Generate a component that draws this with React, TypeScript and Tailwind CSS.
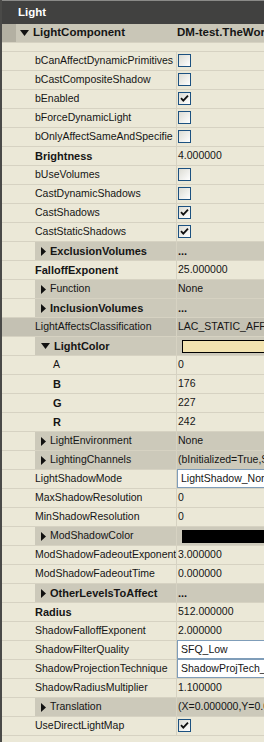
import React from 'react';

type Kind = 'prop' | 'struct' | 'open' | 'child' | 'selected';
type Val =
  | { t: 'text'; v: string; bold?: boolean }
  | { t: 'check'; on: boolean }
  | { t: 'combo'; v: string }
  | { t: 'swatch'; color: string };

type Row = { name: string; kind: Kind; bold?: boolean; value: Val };

const rows: Row[] = [
  { name: 'bCanAffectDynamicPrimitives', kind: 'prop', value: { t: 'check', on: false } },
  { name: 'bCastCompositeShadow', kind: 'prop', value: { t: 'check', on: false } },
  { name: 'bEnabled', kind: 'prop', value: { t: 'check', on: true } },
  { name: 'bForceDynamicLight', kind: 'prop', value: { t: 'check', on: false } },
  { name: 'bOnlyAffectSameAndSpecifie', kind: 'prop', value: { t: 'check', on: false } },
  { name: 'Brightness', kind: 'prop', bold: true, value: { t: 'text', v: '4.000000' } },
  { name: 'bUseVolumes', kind: 'prop', value: { t: 'check', on: false } },
  { name: 'CastDynamicShadows', kind: 'prop', value: { t: 'check', on: false } },
  { name: 'CastShadows', kind: 'prop', value: { t: 'check', on: true } },
  { name: 'CastStaticShadows', kind: 'prop', value: { t: 'check', on: true } },
  { name: 'ExclusionVolumes', kind: 'struct', bold: true, value: { t: 'text', v: '...', bold: true } },
  { name: 'FalloffExponent', kind: 'prop', bold: true, value: { t: 'text', v: '25.000000' } },
  { name: 'Function', kind: 'struct', value: { t: 'text', v: 'None' } },
  { name: 'InclusionVolumes', kind: 'struct', bold: true, value: { t: 'text', v: '...', bold: true } },
  { name: 'LightAffectsClassification', kind: 'selected', value: { t: 'text', v: 'LAC_STATIC_AFFECTING' } },
  { name: 'LightColor', kind: 'open', bold: true, value: { t: 'swatch', color: '#f2e3b0' } },
  { name: 'A', kind: 'child', value: { t: 'text', v: '0' } },
  { name: 'B', kind: 'child', bold: true, value: { t: 'text', v: '176' } },
  { name: 'G', kind: 'child', bold: true, value: { t: 'text', v: '227' } },
  { name: 'R', kind: 'child', bold: true, value: { t: 'text', v: '242' } },
  { name: 'LightEnvironment', kind: 'struct', value: { t: 'text', v: 'None' } },
  { name: 'LightingChannels', kind: 'struct', value: { t: 'text', v: '(bInitialized=True,Static=True)' } },
  { name: 'LightShadowMode', kind: 'prop', value: { t: 'combo', v: 'LightShadow_Normal' } },
  { name: 'MaxShadowResolution', kind: 'prop', value: { t: 'text', v: '0' } },
  { name: 'MinShadowResolution', kind: 'prop', value: { t: 'text', v: '0' } },
  { name: 'ModShadowColor', kind: 'struct', value: { t: 'swatch', color: '#000000' } },
  { name: 'ModShadowFadeoutExponent', kind: 'prop', value: { t: 'text', v: '3.000000' } },
  { name: 'ModShadowFadeoutTime', kind: 'prop', value: { t: 'text', v: '0.000000' } },
  { name: 'OtherLevelsToAffect', kind: 'struct', bold: true, value: { t: 'text', v: '...', bold: true } },
  { name: 'Radius', kind: 'prop', bold: true, value: { t: 'text', v: '512.000000' } },
  { name: 'ShadowFalloffExponent', kind: 'prop', value: { t: 'text', v: '2.000000' } },
  { name: 'ShadowFilterQuality', kind: 'prop', value: { t: 'combo', v: 'SFQ_Low' } },
  { name: 'ShadowProjectionTechnique', kind: 'prop', value: { t: 'combo', v: 'ShadowProjTech_Default' } },
  { name: 'ShadowRadiusMultiplier', kind: 'prop', value: { t: 'text', v: '1.100000' } },
  { name: 'Translation', kind: 'struct', value: { t: 'text', v: '(X=0.000000,Y=0.000000,Z=0.000000)' } },
  { name: 'UseDirectLightMap', kind: 'prop', value: { t: 'check', on: true } },
];

function Arrow({ open }: { open?: boolean }) {
  return open ? (
    <svg width="9" height="6" viewBox="0 0 9 6" className="flex-shrink-0">
      <path d="M0 0 H9 L4.5 6 Z" fill="#111" />
    </svg>
  ) : (
    <svg width="5" height="9" viewBox="0 0 5 9" className="flex-shrink-0">
      <path d="M0 0 L5 4.5 L0 9 Z" fill="#111" />
    </svg>
  );
}

function Check({ on }: { on: boolean }) {
  return (
    <div className="w-[13px] h-[13px] mt-[2px] border border-[#1c5180] bg-gradient-to-br from-[#dcdcd4] to-white flex items-center justify-center">
      {on && (
        <svg width="9" height="9" viewBox="0 0 9 9">
          <path d="M1 4.2 L3.3 6.6 L8 1.6" stroke="#111" strokeWidth="1.8" fill="none" />
        </svg>
      )}
    </div>
  );
}

function Value({ v }: { v: Val }) {
  if (v.t === 'check') return <div className="pl-[1px]"><Check on={v.on} /></div>;
  if (v.t === 'combo')
    return (
      <div className="h-[19px] -mt-[1px] bg-white border border-[#7f9db9] border-r-0 pl-[3px] flex items-center whitespace-nowrap overflow-hidden">
        {v.v}
      </div>
    );
  if (v.t === 'swatch')
    return (
      <div className="pl-[5px] pt-[3px]">
        <div className="h-[13px] border border-black border-r-0" style={{ backgroundColor: v.color }} />
      </div>
    );
  return (
    <div className={`pl-[1px] pt-[1px] whitespace-nowrap overflow-hidden ${v.bold ? 'font-bold text-[11px]' : ''}`}>
      {v.v}
    </div>
  );
}

function PropRow({ row }: { row: Row }) {
  const gray = row.kind === 'struct' || row.kind === 'open';
  const sel = row.kind === 'selected';
  const nameCls = row.bold ? 'font-bold text-[11px]' : '';
  return (
    <div className={`flex h-[19px] border-b border-[#d6d2c2] ${sel ? 'bg-[#c4c1b3]' : ''}`}>
      <div className="w-[174px] flex flex-shrink-0 overflow-hidden">
        {gray ? (
          <>
            <div className="w-[33px] flex-shrink-0" />
            <div className="flex-1 bg-[#ccc9ba] flex items-center gap-[4px] pl-[6px] whitespace-nowrap">
              <Arrow open={row.kind === 'open'} />
              <span className={nameCls}>{row.name}</span>
            </div>
          </>
        ) : (
          <div
            className={`flex items-center whitespace-nowrap ${row.kind === 'child' ? 'pl-[51px]' : 'pl-[33px]'} ${nameCls}`}
          >
            {row.name}
          </div>
        )}
      </div>
      <div className={`flex-1 min-w-0 border-l border-[#d6d2c2] ${gray ? 'bg-[#ccc9ba]' : ''}`}>
        <Value v={row.value} />
      </div>
    </div>
  );
}

export default function App() {
  return (
    <div
      className="w-[264px] h-[742px] overflow-hidden bg-[#ebe8d7] border-l-2 border-[#4a4a48] text-[10.5px] text-[#151515]"
      style={{ fontFamily: '"Liberation Sans", Arial, sans-serif' }}
    >
      {/* title bar */}
      <div className="h-[24px] bg-[#414140] border-t border-[#8a8a88] flex items-center pl-[16px] text-white font-bold text-[11.5px]">
        Light
      </div>
      {/* component header */}
      <div className="h-[19px] flex bg-[#c9c6b7] border-b border-[#d6d2c2]">
        <div className="w-[14px] bg-[#b3b0a2]" />
        <div className="w-[160px] flex items-center gap-[4px] pl-[4px] font-bold text-[11.5px] whitespace-nowrap">
          <Arrow open />
          <span>LightComponent</span>
        </div>
        <div className="flex-1 flex items-center pl-[1px] font-bold text-[11.5px] whitespace-nowrap overflow-hidden">
          DM-test.TheWorld:PersistentLevel
        </div>
      </div>
      <div className="h-[9px] border-b border-[#d6d2c2]" />
      {rows.map((r) => (
        <PropRow key={r.name} row={r} />
      ))}
    </div>
  );
}
